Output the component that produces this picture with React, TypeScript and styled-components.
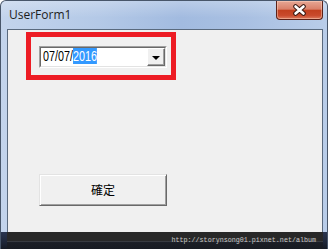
import React from "react";
import styled, { createGlobalStyle } from "styled-components";

const Global = createGlobalStyle`
  html, body { margin: 0; padding: 0; background: #ffffff; }
  #root { width: 328px; height: 249px; overflow: hidden; }
`;

const Window = styled.div`
  width: 328px;
  height: 249px;
  display: flex;
  flex-direction: column;
  box-sizing: border-box;
  border-radius: 6px 6px 0 0;
  border: 1px solid #48566a;
  border-bottom: none;
  background: linear-gradient(to right, #c3d4ec 0%, #b4c9e7 30%, #a2bbe0 55%, #a9c0e2 75%, #b9cde9 100%);
  overflow: hidden;
`;

const TitleBar = styled.div`
  height: 28px;
  flex: none;
  display: flex;
  align-items: flex-start;
  justify-content: space-between;
  background: linear-gradient(to bottom, rgba(255,255,255,0.25), rgba(255,255,255,0) 60%);
`;

const Title = styled.div`
  font-family: "Open Sans", "Noto Sans", sans-serif;
  font-size: 12px;
  color: #1c1c1c;
  padding: 6px 0 0 8px;
  line-height: 16px;
`;

const CloseButton = styled.div`
  width: 47px;
  height: 19px;
  margin-right: 4px;
  box-sizing: border-box;
  border: 1px solid #5b2118;
  border-top: none;
  border-radius: 0 0 4px 4px;
  background: linear-gradient(to bottom, #e6a795 0%, #d98069 45%, #c2401f 52%, #c94a2c 80%, #dc7a5e 100%);
  box-shadow: inset 0 0 0 1px rgba(255, 220, 200, 0.45);
  display: flex;
  align-items: center;
  justify-content: center;
`;

const Body = styled.div`
  flex: 1;
  display: flex;
  min-height: 0;
`;

const SideFrame = styled.div<{ $w: number }>`
  width: ${(p) => p.$w}px;
  flex: none;
`;

const Client = styled.div`
  flex: 1;
  box-sizing: border-box;
  background: #f0f0f0;
  border: 1px solid #5a6a7e;
  border-bottom: none;
  display: flex;
  flex-direction: column;
  align-items: flex-start;
  padding: 2px 0 0 18px;
`;

const Highlight = styled.div`
  width: 150px;
  height: 48px;
  box-sizing: border-box;
  border: 5px solid #ed1c24;
  padding: 9px 0 0 8px;
`;

const Combo = styled.div`
  width: 128px;
  height: 22px;
  box-sizing: border-box;
  border-style: solid;
  border-width: 1px;
  border-color: #a0a0a0 #ffffff #ffffff #a0a0a0;
  display: flex;
`;

const ComboInner = styled.div`
  flex: 1;
  display: flex;
  box-sizing: border-box;
  border-style: solid;
  border-width: 1px;
  border-color: #696969 #e3e3e3 #e3e3e3 #696969;
  background: #ffffff;
`;

const ComboField = styled.div`
  flex: 1;
  overflow: hidden;
  padding: 1px 0 0 2px;
`;

const ComboText = styled.div`
  font-family: "Liberation Sans", Arial, sans-serif;
  font-size: 14px;
  line-height: 15px;
  color: #000;
  white-space: nowrap;
  transform: scaleX(0.77);
  transform-origin: left top;
`;

const Selected = styled.span`
  background: #3399ff;
  color: #ffffff;
`;

const DropButton = styled.div`
  width: 18px;
  box-sizing: border-box;
  background: #f0f0f0;
  border-style: solid;
  border-width: 1px;
  border-color: #ffffff #696969 #696969 #ffffff;
  box-shadow: inset -1px -1px 0 #a0a0a0;
  display: flex;
  align-items: center;
  justify-content: center;
`;

const Arrow = styled.div`
  width: 0;
  height: 0;
  border-left: 4px solid transparent;
  border-right: 4px solid transparent;
  border-top: 4px solid #000;
  margin: 1px 1px 0 0;
`;

const OkButton = styled.div`
  margin: 94px 0 0 13px;
  width: 128px;
  height: 32px;
  box-sizing: border-box;
  background: #f0f0f0;
  border-style: solid;
  border-width: 1px;
  border-color: #e3e3e3 #696969 #696969 #e3e3e3;
  box-shadow: inset 1px 1px 0 #ffffff, inset -1px -1px 0 #a0a0a0;
  display: flex;
  align-items: center;
  justify-content: center;
  font-family: "Noto Sans CJK TC", "Noto Sans CJK SC", sans-serif;
  font-size: 12px;
  color: #000;
  padding-bottom: 1px;
`;

const Footer = styled.div`
  height: 17px;
  flex: none;
  display: flex;
`;

const FooterSide = styled.div<{ $w: number }>`
  width: ${(p) => p.$w}px;
  flex: none;
  background: linear-gradient(to bottom, #2a3550 0%, #1e2638 60%, #161a24 100%);
`;

const FooterMid = styled.div`
  flex: 1;
  background: linear-gradient(to bottom, #282828 0%, #282828 55%, #3a3d44 56%, #1b1e26 62%, #181b22 100%);
  display: flex;
  justify-content: flex-end;
  align-items: flex-start;
  padding: 4px 7px 0 0;
`;

const Watermark = styled.div`
  font-family: "Liberation Mono", "DejaVu Sans Mono", monospace;
  font-size: 6.7px;
  line-height: 8px;
  color: #c8c8c8;
  white-space: nowrap;
`;

export default function App() {
  return (
    <>
      <Global />
      <Window>
        <TitleBar>
          <Title>UserForm1</Title>
          <CloseButton>
            <svg width="15" height="12" viewBox="0 0 15 12">
              <path d="M3.5 2.5 L11.5 9.5 M11.5 2.5 L3.5 9.5" stroke="#3a1a14" strokeWidth="4.6" strokeLinecap="round" />
              <path d="M3.5 2.5 L11.5 9.5 M11.5 2.5 L3.5 9.5" stroke="#ffffff" strokeWidth="2.6" strokeLinecap="round" />
            </svg>
          </CloseButton>
        </TitleBar>
        <Body>
          <SideFrame $w={6} />
          <Client>
            <Highlight>
              <Combo>
                <ComboInner>
                  <ComboField>
                    <ComboText>
                      07/07/<Selected>2016</Selected>
                    </ComboText>
                  </ComboField>
                  <DropButton>
                    <Arrow />
                  </DropButton>
                </ComboInner>
              </Combo>
            </Highlight>
            <OkButton>確定</OkButton>
          </Client>
          <SideFrame $w={4} />
        </Body>
        <Footer>
          <FooterSide $w={6} />
          <FooterMid>
            <Watermark>http://storynsong01.pixnet.net/album</Watermark>
          </FooterMid>
          <FooterSide $w={4} />
        </Footer>
      </Window>
    </>
  );
}
